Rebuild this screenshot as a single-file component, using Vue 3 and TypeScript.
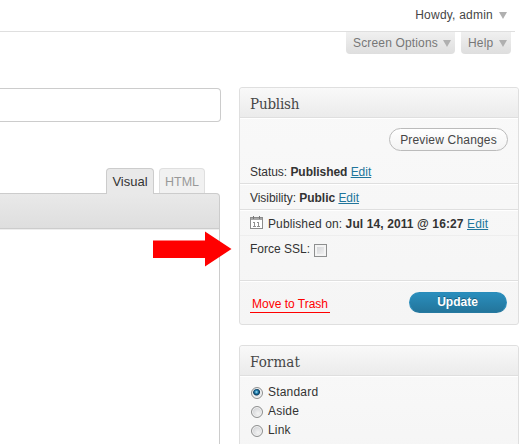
<script setup lang="ts">
import { ref } from 'vue'

const screenTabs = [
  { label: 'Screen Options', cls: 'options' },
  { label: 'Help', cls: 'help' },
]
const formats = ['Standard', 'Aside', 'Link']
const format = ref('Standard')
const forceSsl = ref(false)
</script>

<template>
  <div class="page">
    <header class="top">
      <span class="howdy">Howdy, admin</span>
      <i class="caret" />
    </header>
    <nav class="screen-meta">
      <button v-for="t in screenTabs" :key="t.label" class="meta-tab" :class="t.cls">
        <span>{{ t.label }}</span><i class="caret" />
      </button>
    </nav>

    <div class="columns">
      <main class="editor">
        <input class="title" type="text" />
        <div class="tabs">
          <a class="tab active"><span class="visual">Visual</span></a>
          <a class="tab"><span class="html">HTML</span></a>
        </div>
        <div class="toolbar" />
        <div class="canvas" />
        <svg class="arrow" width="79" height="36" viewBox="0 0 79 36">
          <path d="M0 9.500H52V0.500L78.500 18L52 35.500V27H0Z" fill="#f00" />
        </svg>
      </main>

      <aside class="side">
        <section class="box publish">
          <h3><span class="t-publish">Publish</span></h3>
          <div class="preview-row">
            <button class="preview"><span>Preview Changes</span></button>
          </div>
          <div class="row status"><span>Status: <b>Published</b> <a>Edit</a></span></div>
          <div class="row visibility"><span>Visibility: <b>Public</b> <a>Edit</a></span></div>
          <div class="row date">
            <svg class="cal" width="13" height="13" viewBox="0 0 13 13">
              <rect x=".5" y="1.500" width="12" height="11" fill="#fff" stroke="#8c8c8c" />
              <path d="M1 2h11v2H1z" fill="#a8a8a8" />
              <path d="M3.500 0v3M9.500 0v3" stroke="#777" />
              <path d="M3 6.500h2M4.500 6v4M3 10.500h3M7 6.500h2M8.500 6v4M7 10.500h3" stroke="#909090" fill="none" />
            </svg>
            <span>Published on: <b>Jul 14, 2011 @ 16:27</b> <a>Edit</a></span>
          </div>
          <label class="row ssl"><span>Force SSL:</span><input v-model="forceSsl" type="checkbox" class="check" /></label>
          <footer class="actions">
            <a class="trash"><span>Move to Trash</span></a>
            <button class="update"><span>Update</span></button>
          </footer>
        </section>

        <section class="box format">
          <h3><span class="t-format">Format</span></h3>
          <div class="formats">
            <label v-for="f in formats" :key="f">
              <input v-model="format" type="radio" name="format" :value="f" /><span>{{ f }}</span>
            </label>
          </div>
        </section>
      </aside>
    </div>
  </div>
</template>

<style>
body { background: #fff; overflow: hidden; }
</style>

<style scoped>
* { box-sizing: border-box; }
.page {
  width: 530px; height: 444px; overflow: hidden;
  font: 12px/18px "Liberation Sans", Arial, sans-serif; color: #333; white-space: nowrap;
}
button { font: inherit; padding: 0; border: 0; margin: 0; }
.caret { width: 0; height: 0; border: 4px solid transparent; border-top: 7px solid #b0b0b0; border-bottom: 0; flex: none; }
.top {
  width: 515px; height: 32px; border-bottom: 1px solid #dfdfdf;
  display: flex; justify-content: flex-end; align-items: flex-start; padding: 6px 8px 0 0; gap: 6px;
  color: #464646;
}
.howdy { letter-spacing: .22px; }
.top .caret { margin-top: 6px; }
.screen-meta { width: 511px; height: 55px; display: flex; justify-content: flex-end; align-items: flex-start; gap: 6px; }
.meta-tab {
  height: 22px; border-radius: 0 0 4px 4px; background: linear-gradient(#f0f0f0, #dedede);
  color: #777; display: flex; align-items: center; justify-content: space-between; padding: 0 4px 0 7px;
  letter-spacing: .16px;
}
.options { width: 109px; }
.help { width: 50px; }
.columns { display: flex; gap: 18px; align-items: flex-start; }
.editor { width: 221px; height: 357px; display: flex; flex-direction: column; position: relative; padding-top: 1px; }
.title {
  display: block; width: 221px; height: 34px; margin: 0; border: 1px solid #ccc; border-left: 0;
  border-radius: 0 4px 4px 0; background: #fff; outline: 0;
}
.tabs { display: flex; gap: 5px; margin: 46px 0 0 106px; height: 25px; }
.tab {
  width: 46px; height: 25px; border: 1px solid #dfdfdf; border-bottom: 0; border-radius: 4px 4px 0 0;
  background: #f1f1f1; color: #999; display: flex; justify-content: center; padding-top: 4px;
}
.tab.active { width: 48px; height: 26px; border-color: #ccc; background: #e9e9e9; color: #333; z-index: 1; }
.visual { font-size: 13px; }
.html { font-size: 12.5px; }
.toolbar {
  width: 220px; height: 36px; border: 1px solid #ccc; border-left: 0; border-radius: 0 4px 0 0;
  background: linear-gradient(#e9e9e9, #dedede);
}
.canvas { width: 220px; flex: 1; border-right: 1px solid #ccc; box-shadow: inset 0 1px #eee; }
.arrow { position: absolute; left: 153px; top: 144px; z-index: 2; }
.side { width: 280px; }
.box { border: 1px solid #dfdfdf; border-radius: 3px; background: linear-gradient(#f9f9f9, #f5f5f5); }
.box h3 {
  margin: 0; height: 29px; border-radius: 3px 3px 0 0; background: linear-gradient(#f9f9f9, #ebebeb);
  font: 15px/31px "DejaVu Serif Condensed", "DejaVu Serif", serif; font-stretch: condensed; color: #464646;
  padding: 1px 0 0 10px; display: flex;
}
.t-publish { letter-spacing: -.2px; }
.t-format { letter-spacing: .1px; }
.publish { height: 238px; }
.preview-row, .formats { border-top: 1px solid #dfdfdf; box-shadow: inset 0 1px #fff; }
.preview-row { height: 66px; display: flex; justify-content: flex-end; padding: 10px 10px 0 0; }
.preview {
  width: 119px; height: 23px; border: 1px solid #bbb; border-radius: 12px;
  background: linear-gradient(#fff, #f3f3f3); color: #464646; line-height: 22px; letter-spacing: .18px;
}
.row { display: flex; height: 26px; padding: 5px 0 0 10px; border-top: 1px solid #dfdfdf; box-shadow: inset 0 1px #fff; }
.row a { color: #21759b; text-decoration: underline; }
.row.status { height: 21px; margin-top: -21px; border: 0; box-shadow: none; padding-top: 1px; letter-spacing: -.04px; }
.row.visibility { letter-spacing: -.04px; }
.row.date { padding-top: 5px; letter-spacing: .11px; }
.cal { margin: 1px 5px 0 0; }
.row.ssl { height: 45px; border-top-color: #eee; box-shadow: none; padding-top: 4px; }
.check {
  appearance: none; width: 13px; height: 13px; margin: 4px 0 0 4px; border: 1px solid #8e8f8f;
  background: linear-gradient(135deg, #cfd0d3, #f6f6f6); box-shadow: inset 0 0 0 2px #f4f4f4;
}
.actions {
  height: 45px; border-top: 1px solid #dfdfdf; box-shadow: inset 0 1px #fff;
  display: flex; justify-content: space-between; align-items: flex-start; padding: 11px 11px 0 10px;
}
.trash { color: #f00; border-bottom: 1px solid #f00; width: 80px; height: 21px; padding: 3px 0 0 2px; }
.update {
  width: 98px; height: 21px; border-radius: 11px; border: 1px solid #298cba; border-bottom-color: #2679a0;
  background: linear-gradient(#2a8ebd, #23759b); color: #fff; font-weight: bold; line-height: 19px;
  text-shadow: 0 -1px rgba(0, 0, 0, .3); padding-right: 1px;
}
.format { height: 120px; margin-top: 20px; }
.formats { padding: 7px 0 0 11px; letter-spacing: .2px; }
.formats label { display: flex; height: 19px; align-items: flex-start; }
.formats input {
  appearance: none; width: 12px; height: 12px; margin: 4px 5px 0 0; border-radius: 50%;
  border: 1px solid #8e8f8f; background: radial-gradient(circle at 60% 65%, #f4f4f4, #c4c6ca);
  box-shadow: inset 0 0 0 1px #f4f4f4;
}
.formats input:checked { background: radial-gradient(circle at 45% 40%, #b5e5f8 0, #2486b5 1.5px, #0b3a5c 3px, #e6e8ea 4px); }
</style>
